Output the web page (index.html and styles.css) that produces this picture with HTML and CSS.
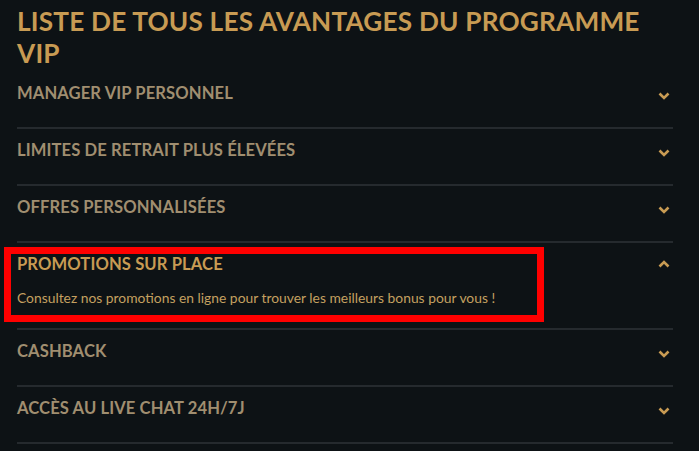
FILE: index.html
```html
<!DOCTYPE html>
<html lang="fr">
<head>
<meta charset="utf-8">
<title>Avantages VIP</title>
<link rel="stylesheet" href="styles.css">
</head>
<body>
<main class="page">
  <h1 class="title">LISTE DE TOUS LES AVANTAGES DU PROGRAMME VIP</h1>
  <ul class="list">
    <li class="item">
      <div class="head"><span class="label">MANAGER VIP PERSONNEL</span><svg class="chev" viewBox="0 0 12 8"><path d="M1.5 1.5 L6 6 L10.5 1.5"/></svg></div>
    </li>
    <li class="item">
      <div class="head"><span class="label">LIMITES DE RETRAIT PLUS ÉLEVÉES</span><svg class="chev" viewBox="0 0 12 8"><path d="M1.5 1.5 L6 6 L10.5 1.5"/></svg></div>
    </li>
    <li class="item">
      <div class="head"><span class="label">OFFRES PERSONNALISÉES</span><svg class="chev" viewBox="0 0 12 8"><path d="M1.5 1.5 L6 6 L10.5 1.5"/></svg></div>
    </li>
    <li class="item open">
      <div class="head"><span class="label">PROMOTIONS SUR PLACE</span><svg class="chev" viewBox="0 0 12 8"><path d="M1.5 6.5 L6 2 L10.5 6.5"/></svg></div>
      <p class="body">Consultez nos promotions en ligne pour trouver les meilleurs bonus pour vous !</p>
      <div class="highlight"></div>
    </li>
    <li class="item">
      <div class="head"><span class="label">CASHBACK</span><svg class="chev" viewBox="0 0 12 8"><path d="M1.5 1.5 L6 6 L10.5 1.5"/></svg></div>
    </li>
    <li class="item">
      <div class="head"><span class="label">ACCÈS AU LIVE CHAT 24H/7J</span><svg class="chev" viewBox="0 0 12 8"><path d="M1.5 1.5 L6 6 L10.5 1.5"/></svg></div>
    </li>
  </ul>
</main>
</body>
</html>
```

FILE: styles.css
```css
html, body {
  margin: 0;
  padding: 0;
  background: #0d1215;
}
body {
  font-family: "Lato", "Open Sans", sans-serif;
  overflow: hidden;
}
.page {
  padding: 5px 26px 0 17px;
}
.title {
  margin: 0 0 3px 0;
  font-size: 26.2px;
  line-height: 32px;
  font-weight: 700;
  color: #c89b53;
  letter-spacing: 0.2px;
}
.list {
  list-style: none;
  margin: 0;
  padding: 0;
}
.item {
  position: relative;
  border-bottom: 2px solid #252a2e;
  padding-bottom: 13px;
}
.head {
  height: 42px;
  display: flex;
  align-items: center;
  justify-content: space-between;
}
.label {
  font-size: 16.6px;
  font-weight: 700;
  color: #a08e70;
  letter-spacing: 0.1px;
}
.open .label {
  color: #c89b53;
}
.chev {
  width: 12px;
  height: 8px;
  margin-right: 3px;
  margin-top: 5px;
  fill: none;
  stroke: #c89b53;
  stroke-width: 2.6;
}
.open .chev {
  margin-top: -1px;
}
.body {
  margin: 3px 0 7px 0;
  font-size: 13.85px;
  line-height: 20px;
  color: #c4a060;
}
.highlight {
  position: absolute;
  left: -13px;
  top: 4px;
  width: 540px;
  height: 75px;
  box-sizing: border-box;
  border: 7px solid #ff0000;
  pointer-events: none;
}
```
